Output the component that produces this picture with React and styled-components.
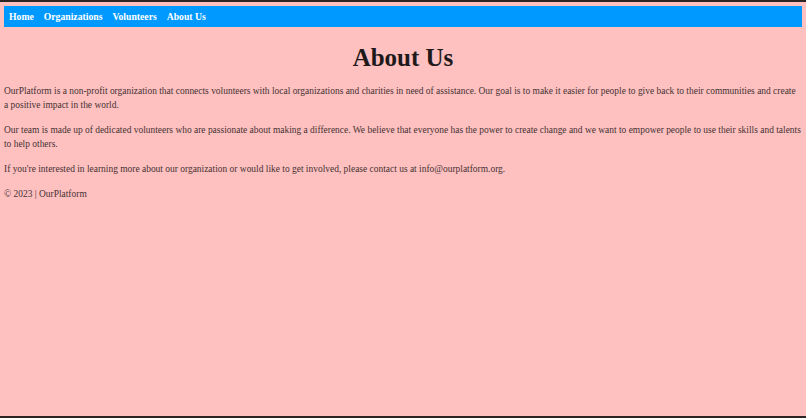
import styled, { createGlobalStyle } from "styled-components";

const GlobalStyle = createGlobalStyle`
  html, body {
    margin: 0;
    padding: 0;
    background: #ffc0c0;
  }
  * {
    box-sizing: border-box;
  }
`;

const links = ["Home", "Organizations", "Volunteers", "About Us"];

const App = () => {
  return (
    <>
      <GlobalStyle />
      <Page>
        <NavBar>
          {links.map((label) => (
            <NavLink key={label} href="#">
              {label}
            </NavLink>
          ))}
        </NavBar>
        <Main>
          <Title>About Us</Title>
          <Para>
            OurPlatform is a non-profit organization that connects volunteers
            with local organizations and charities in need of assistance. Our
            goal is to make it easier for people to give back to their
            communities and create a positive impact in the world.
          </Para>
          <Para>
            Our team is made up of dedicated volunteers who are passionate about
            making a difference. We believe that everyone has the power to
            create change and we want to empower people to use their skills and
            talents to help others.
          </Para>
          <Para>
            If you're interested in learning more about our organization or
            would like to get involved, please contact us at
            info@ourplatform.org.
          </Para>
        </Main>
        <Footer>© 2023 | OurPlatform</Footer>
      </Page>
    </>
  );
};

export default App;

const Page = styled.div`
  min-height: 100vh;
  border-top: 2px solid #2e2424;
  border-bottom: 2px solid #2e2424;
  padding: 4px 4px 0;
  font-family: "Liberation Serif", "Times New Roman", serif;
  color: #433;
`;

const NavBar = styled.nav`
  display: flex;
  align-items: center;
  gap: 10px;
  height: 21px;
  padding: 0 5px;
  background: #0099ff;
`;

const NavLink = styled.a`
  color: #fff;
  font-weight: bold;
  font-size: 9.7px;
  text-decoration: none;
`;

const Main = styled.main`
  display: flex;
  flex-direction: column;
`;

const Title = styled.h1`
  margin: 14px 0 10px;
  text-align: center;
  font-size: 25px;
  line-height: 34px;
  font-weight: bold;
  color: #1e1a1a;
`;

const Para = styled.p`
  margin: 0 0 12px;
  font-size: 9.45px;
  line-height: 13.6px;

  &:last-child {
    margin-bottom: 11px;
  }
`;

const Footer = styled.footer`
  font-size: 9.45px;
  line-height: 13.6px;
`;
